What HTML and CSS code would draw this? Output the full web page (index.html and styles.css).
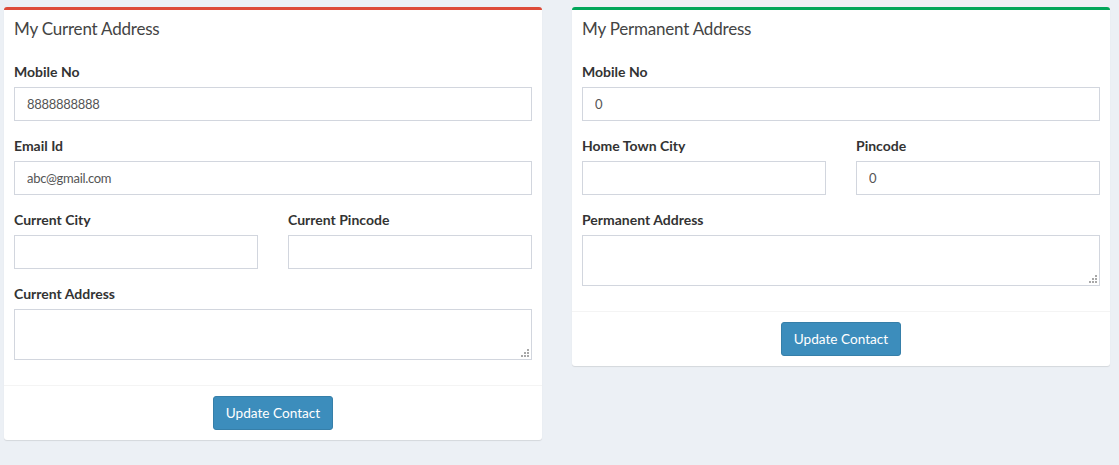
FILE: index.html
```html
<!DOCTYPE html>
<html>
<head>
<meta charset="utf-8">
<link rel="stylesheet" href="styles.css">
</head>
<body>
<div class="row">
  <div class="box box-danger">
    <div class="box-header"><h3 class="box-title">My Current Address</h3></div>
    <div class="box-body">
      <div class="form-group">
        <label class="lbl">Mobile No</label>
        <input class="form-control" type="text" value="8888888888">
      </div>
      <div class="form-group">
        <label class="lbl">Email Id</label>
        <input class="form-control" type="text" value="abc@gmail.com">
      </div>
      <div class="form-row">
        <div class="form-group">
          <label class="lbl">Current City</label>
          <input class="form-control" type="text" value="">
        </div>
        <div class="form-group">
          <label class="lbl">Current Pincode</label>
          <input class="form-control" type="text" value="">
        </div>
      </div>
      <div class="form-group">
        <label class="lbl">Current Address</label>
        <textarea class="form-control textarea"></textarea>
      </div>
    </div>
    <div class="box-footer"><button class="btn">Update Contact</button></div>
  </div>
  <div class="box box-success">
    <div class="box-header"><h3 class="box-title">My Permanent Address</h3></div>
    <div class="box-body">
      <div class="form-group">
        <label class="lbl">Mobile No</label>
        <input class="form-control" type="text" value="0">
      </div>
      <div class="form-row">
        <div class="form-group">
          <label class="lbl">Home Town City</label>
          <input class="form-control" type="text" value="">
        </div>
        <div class="form-group">
          <label class="lbl">Pincode</label>
          <input class="form-control" type="text" value="0">
        </div>
      </div>
      <div class="form-group">
        <label class="lbl">Permanent Address</label>
        <textarea class="form-control textarea"></textarea>
      </div>
    </div>
    <div class="box-footer"><button class="btn">Update Contact</button></div>
  </div>
</div>
</body>
</html>
```
FILE: styles.css
```css
* { box-sizing: border-box; }
html, body { margin: 0; padding: 0; }
body {
  background: #ecf0f5;
  font-family: "Lato", "Open Sans", sans-serif;
  font-size: 14px;
  line-height: 20px;
  color: #333;
  width: 1119px;
  height: 465px;
  overflow: hidden;
}
.row {
  display: flex;
  align-items: flex-start;
  gap: 30px;
  padding: 7px 0 0 4px;
}
.box {
  width: 538px;
  background: #fff;
  border-top: 3px solid #d2d6de;
  border-radius: 3px;
  box-shadow: 0 1px 1px rgba(0,0,0,0.1);
}
.box-danger { border-top-color: #dd4b39; }
.box-success { border-top-color: #00a65a; }
.box-header {
  padding: 8px 10px 12px;
  height: 42px;
  display: flex;
  align-items: center;
}
.box-title {
  margin: 0;
  font-size: 17px;
  line-height: 18px;
  letter-spacing: -0.2px;
  font-weight: 400;
  color: #444;
}
.box-body { padding: 10px; }
.form-group { margin-bottom: 15px; }
.form-row {
  display: grid;
  grid-template-columns: 1fr 1fr;
  column-gap: 30px;
}
.lbl {
  display: block;
  font-weight: 700;
  margin-bottom: 5px;
  height: 20px;
  color: #333;
}
.form-control {
  display: block;
  width: 100%;
  height: 34px;
  padding: 6px 12px;
  font-family: inherit;
  font-size: 13px;
  letter-spacing: -0.3px;
  line-height: 20px;
  color: #555;
  background: #fff;
  border: 1px solid #d2d6de;
  border-radius: 0;
  outline: none;
  margin: 0;
}
.textarea {
  height: 51px;
  resize: none;
  background-color: #fff;
  background-repeat: no-repeat;
  background-image:
    linear-gradient(#a8a8a8, #a8a8a8),
    linear-gradient(#a8a8a8, #a8a8a8),
    linear-gradient(#a8a8a8, #a8a8a8),
    linear-gradient(#a8a8a8, #a8a8a8),
    linear-gradient(#a8a8a8, #a8a8a8),
    linear-gradient(#a8a8a8, #a8a8a8);
  background-size: 2px 2px;
  background-position:
    right 2px bottom 8px,
    right 2px bottom 5px,
    right 5px bottom 5px,
    right 2px bottom 2px,
    right 5px bottom 2px,
    right 8px bottom 2px;
}
.box-footer {
  border-top: 1px solid #f4f4f4;
  padding: 10px;
  text-align: center;
}
.btn {
  height: 34px;
  width: 120px;
  padding: 6px 0;
  font-family: inherit;
  font-size: 13.6px;
  line-height: 20px;
  color: #fff;
  background: #3c8dbc;
  border: 1px solid #367fa9;
  border-radius: 3px;
  cursor: pointer;
}
```
